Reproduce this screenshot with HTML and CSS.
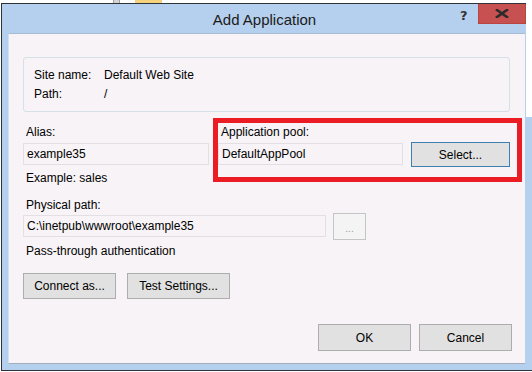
FILE: index.html
```html
<!DOCTYPE html>
<html>
<head>
	<title>Add Application</title>
	<meta charset="UTF-8">
	<link rel="stylesheet" href="styles.css">
</head>
<body>
	<div class="desk">
		<span class="deskTile"></span>
		<span class="deskFolder"></span>
	</div>
	<div class="win">
		<div class="titleBar">
			<span class="title">Add Application</span>
			<span class="help">?</span>
			<span class="close">
				<svg width="14" height="9" viewBox="0 0 14 9"><path d="M2 1 L12 8 M12 1 L2 8" stroke="#2b2b2b" stroke-width="2.6" stroke-linecap="square"/></svg>
			</span>
		</div>
		<div class="client">
			<div class="site">
				<div class="siteRow"><span class="siteKey">Site name:</span><span>Default Web Site</span></div>
				<div class="siteRow"><span class="siteKey">Path:</span><span>/</span></div>
			</div>

			<div class="fields">
				<div class="colLeft">
					<div class="label">Alias:</div>
					<div class="input aliasInput">example35</div>
					<div class="label hint">Example: sales</div>
				</div>
				<div class="colRight">
					<div class="label poolLabel">Application pool:</div>
					<div class="poolRow">
						<div class="input poolInput">DefaultAppPool</div>
						<button class="btn btnFocus selectBtn">Select...</button>
					</div>
				</div>
			</div>

			<div class="label pathLabel">Physical path:</div>
			<div class="pathRow">
				<div class="input pathInput">C:\inetpub\wwwroot\example35</div>
				<button class="btn browseBtn">...</button>
			</div>
			<div class="label passLabel">Pass-through authentication</div>

			<div class="btnRow">
				<button class="btn connectBtn">Connect as...</button>
				<button class="btn testBtn">Test Settings...</button>
			</div>

			<div class="footRow">
				<button class="btn okBtn">OK</button>
				<button class="btn okBtn">Cancel</button>
			</div>

			<div class="mark"></div>
		</div>
	</div>
	<div class="deskRight"></div>
</body>
</html>
```

FILE: styles.css
```css
*{
	margin: 0;
	padding: 0;
	box-sizing: border-box;
}
html, body{
	width: 532px;
	height: 372px;
	overflow: hidden;
}
body{
	background: #fff;
	font-family: "Liberation Sans", Arial, sans-serif;
	font-size: 12px;
	color: #000;
	position: relative;
}
.desk{
	height: 3px;
	display: flex;
}
.deskTile{
	width: 7px;
	height: 3px;
	margin-left: 113px;
	background: #d4d4d4;
	border-left: 1px solid #a0a0a0;
	border-right: 1px solid #a0a0a0;
}
.deskFolder{
	width: 27px;
	height: 3px;
	margin-left: 15px;
	background: #f6d27c;
}
.deskRight{
	position: absolute;
	left: 526px;
	top: 0;
	width: 6px;
	height: 117px;
	background: #fff;
}
.win{
	margin-left: 1px;
	width: 540px;
	height: 368px;
	background: #b5d0ee;
	border-top: 1px solid #2e3338;
	border-left: 1px solid #2e3338;
	border-bottom: 1px solid #2e3338;
}
.titleBar{
	height: 29px;
	display: flex;
	position: relative;
}
.title{
	width: 523px;
	text-align: center;
	font-size: 15px;
	line-height: 29px;
	color: #1a1a1a;
	padding-left: 2px;
	padding-top: 1px;
}
.help{
	position: absolute;
	left: 458px;
	top: 4px;
	font-size: 13px;
	font-weight: bold;
	color: #333;
	font-family: "DejaVu Sans", sans-serif;
}
.close{
	position: absolute;
	left: 476px;
	top: 0;
	width: 48px;
	height: 20px;
	background: #c75050;
	border: 1px solid #b9453f;
	border-top: none;
	display: flex;
	align-items: center;
	justify-content: center;
}
.client{
	margin-left: 6px;
	width: 517px;
	height: 331px;
	background: #f7f3f7;
	border-top: 1px solid #a7bbd2;
	border-left: 1px solid #cfe0f3;
	border-bottom: 1px solid #a4afbb;
	padding: 23px 14px 0 14px;
	position: relative;
}
.site{
	width: 487px;
	height: 55px;
	border: 1px solid #d6e0e8;
	border-radius: 3px;
	padding: 8px 0 0 10px;
}
.siteRow{
	display: flex;
	line-height: 19px;
}
.siteKey{
	width: 70px;
}
.fields{
	display: flex;
	margin-top: 12px;
}
.label{
	line-height: 16px;
	height: 16px;
	padding-left: 3px;
}
.input{
	height: 22px;
	line-height: 20px;
	border: 1px solid #e3e0e3;
	padding-left: 3px;
	margin-top: 3px;
	white-space: nowrap;
}
.colLeft{
	width: 186px;
}
.hint{
	margin-top: 5px;
}
.colRight{
	margin-left: 9px;
}
.poolRow{
	display: flex;
	align-items: flex-start;
}
.poolInput{
	width: 185px;
}
.btn{
	font-family: "Liberation Sans", Arial, sans-serif;
	font-size: 12px;
	color: #000;
	background: #e1e1e1;
	border: 1px solid #adadad;
}
.btnFocus{
	border-color: #3c7fb1;
}
.selectBtn{
	width: 99px;
	height: 25px;
	margin-left: 8px;
	margin-top: 2px;
}
.pathLabel{
	margin-top: 11px;
}
.pathRow{
	display: flex;
	align-items: flex-start;
}
.pathInput{
	width: 303px;
	margin-top: 2px;
}
.browseBtn{
	width: 33px;
	height: 27px;
	margin-left: 7px;
	background: #f4f4f4;
	border-color: #c5c5c5;
	color: #9a9a9a;
	font-size: 10px;
	padding-top: 3px;
}
.passLabel{
	margin-top: 3px;
}
.btnRow{
	display: flex;
	gap: 11px;
	margin-top: 14px;
}
.connectBtn{
	width: 93px;
	height: 26px;
}
.testBtn{
	width: 103px;
	height: 26px;
}
.footRow{
	display: flex;
	justify-content: flex-end;
	gap: 8px;
	margin-top: 25px;
	margin-right: -1px;
}
.okBtn{
	width: 93px;
	height: 27px;
}
.mark{
	position: absolute;
	left: 204px;
	top: 84px;
	width: 309px;
	height: 64px;
	border: 5px solid #ec1c24;
}
```
